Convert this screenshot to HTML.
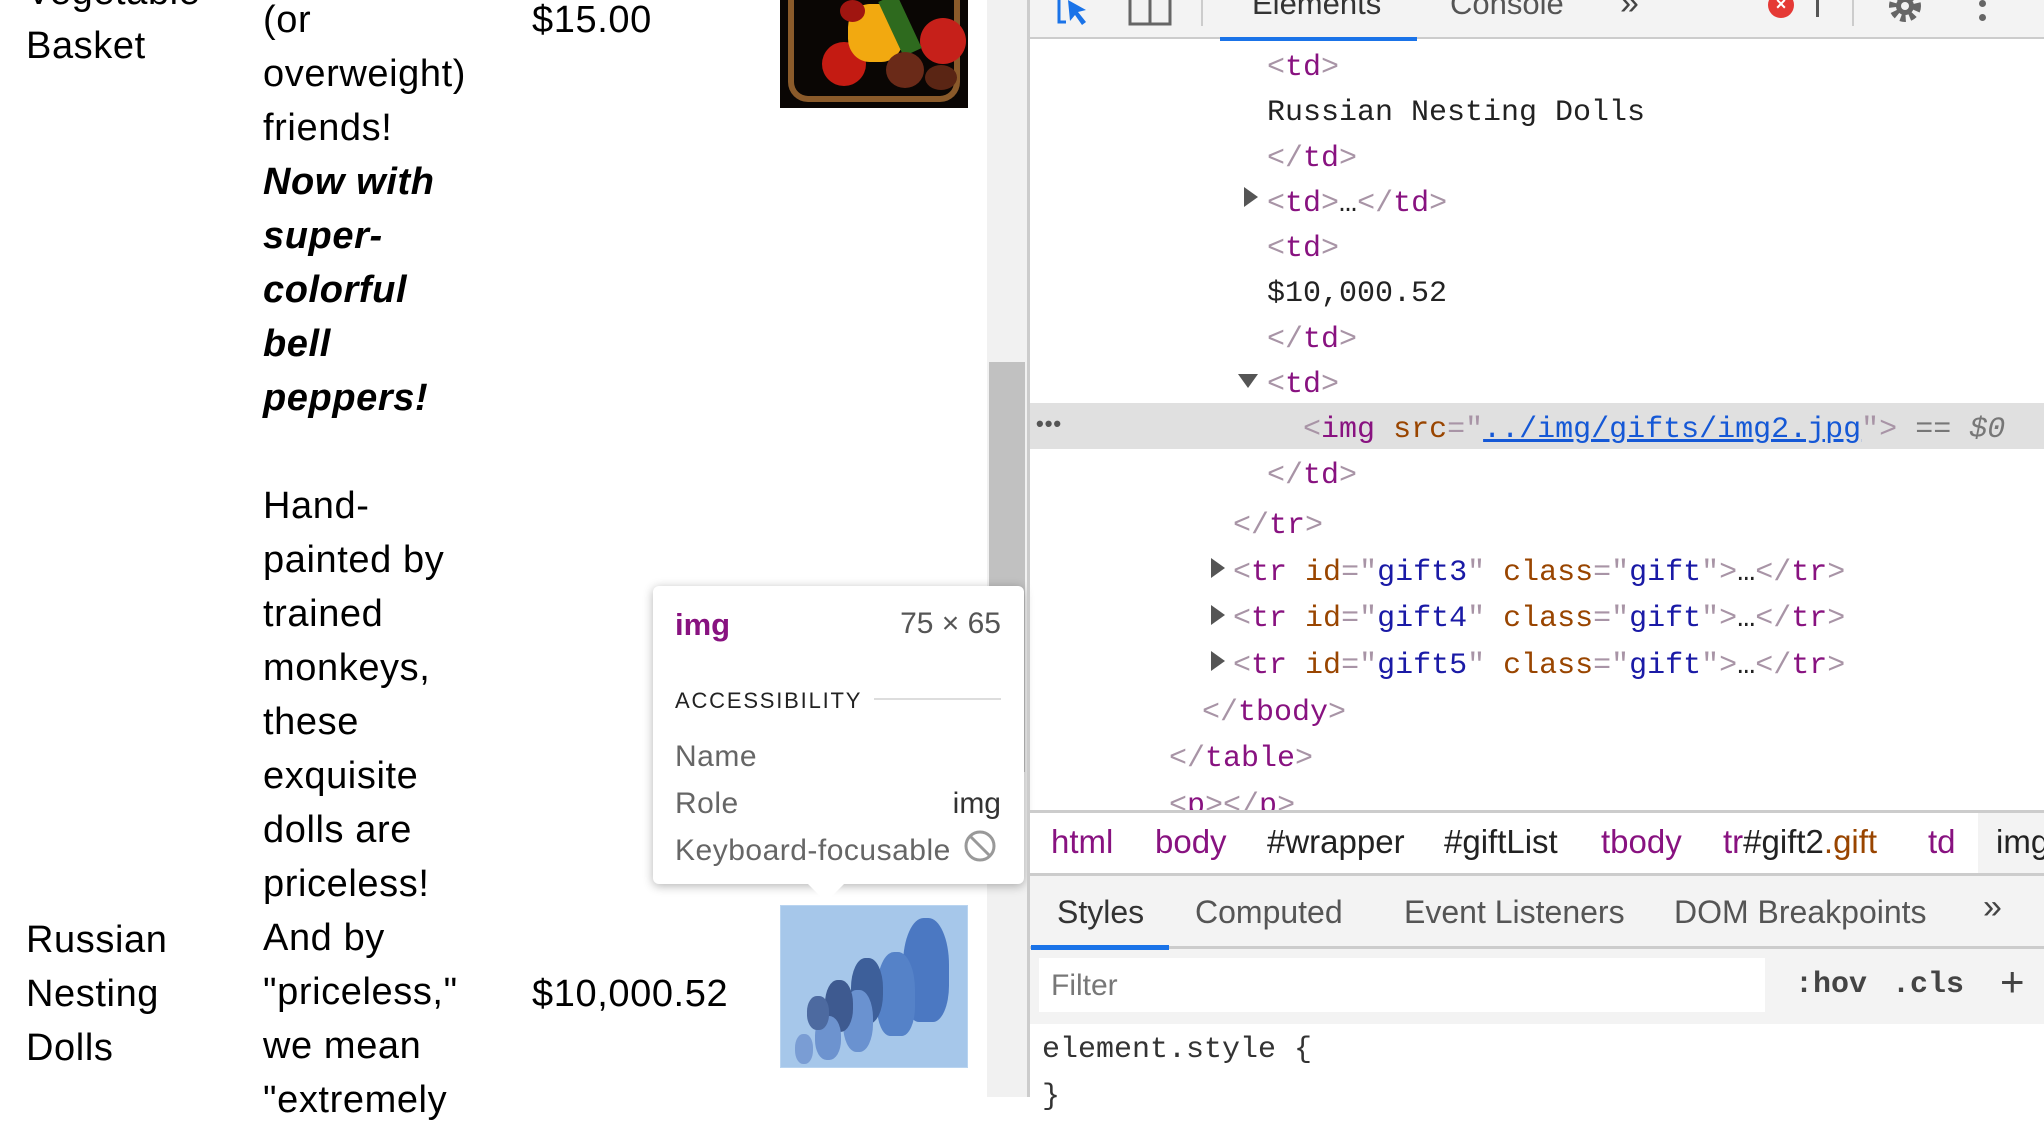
<!DOCTYPE html>
<html><head><meta charset="utf-8"><style>
*{margin:0;padding:0;box-sizing:border-box}
body{width:2044px;height:1097px;overflow:hidden;position:relative;background:#fff;font-family:"Liberation Sans",sans-serif}
.a{position:absolute;white-space:pre}
.pg{font-size:38px;color:#000;line-height:54px;letter-spacing:0.6px}
.bi{font-weight:bold;font-style:italic}
.m{font-family:"Liberation Mono",monospace;font-size:30px;line-height:46.7px;color:#222}
.t{color:#881280}.b{color:#a894a6}.n{color:#994500}.v{color:#1a1aa6}
.tri{position:absolute;width:0;height:0}
</style></head><body>
<!-- page -->
<div class="a pg" style="left:26px;top:-35px">Vegetable
Basket</div>
<div class="a pg" style="left:263px;top:-7px">(or
overweight)
friends!
<span class="bi">Now with
super-
colorful
bell
peppers!</span>

Hand-
painted by
trained
monkeys,
these
exquisite
dolls are
priceless!
And by
"priceless,"
we mean
"extremely</div>
<div class="a pg" style="left:26px;top:913px">Russian
Nesting
Dolls</div>
<div class="a pg" style="left:532px;top:-7px">$15.00</div>
<div class="a pg" style="left:532px;top:967px">$10,000.52</div>
<!-- veg image -->
<div class="a" style="left:780px;top:0;width:188px;height:108px;background:#0a0604;overflow:hidden">
<div class="a" style="left:8px;top:-10px;width:172px;height:112px;border:6px solid #8a5a2a;border-top:none;border-radius:0 0 20px 20px"></div>
<div class="a" style="left:42px;top:42px;width:44px;height:44px;border-radius:50%;background:#c41b12"></div>
<div class="a" style="left:68px;top:4px;width:55px;height:58px;border-radius:40%;background:#f2a910"></div>
<div class="a" style="left:140px;top:18px;width:46px;height:46px;border-radius:50%;background:#c6201a"></div>
<div class="a" style="left:110px;top:-5px;width:20px;height:60px;background:#2e6a1e;transform:rotate(-25deg)"></div>
<div class="a" style="left:106px;top:52px;width:38px;height:36px;border-radius:50%;background:#6a2a18"></div>
<div class="a" style="left:145px;top:65px;width:32px;height:25px;border-radius:50%;background:#5a2514"></div>
<div class="a" style="left:60px;top:0;width:25px;height:22px;border-radius:50%;background:#a01510"></div>
</div>
<!-- dolls -->
<div class="a" style="left:780px;top:905px;width:188px;height:163px;background:#a6c7ea;border:1px solid #b9d4f0">
<div class="a" style="left:122px;top:12px;width:46px;height:104px;border-radius:45% 45% 35% 35%;background:#4b78c2"></div>
<div class="a" style="left:96px;top:46px;width:38px;height:84px;border-radius:45% 45% 35% 35%;background:#5582c8"></div>
<div class="a" style="left:70px;top:52px;width:32px;height:66px;border-radius:45%;background:#3d5f9a"></div>
<div class="a" style="left:62px;top:84px;width:30px;height:62px;border-radius:45%;background:#6a92d0"></div>
<div class="a" style="left:44px;top:74px;width:28px;height:52px;border-radius:45%;background:#3e5a90"></div>
<div class="a" style="left:34px;top:110px;width:26px;height:44px;border-radius:45%;background:#6d93cf"></div>
<div class="a" style="left:26px;top:90px;width:22px;height:34px;border-radius:45%;background:#4d6aa0"></div>
<div class="a" style="left:14px;top:128px;width:18px;height:30px;border-radius:45%;background:#7a9dd4"></div>
</div>
<!-- scrollbar -->
<div class="a" style="left:987px;top:0;width:40px;height:1097px;background:#f1f1f1"></div>
<div class="a" style="left:989px;top:362px;width:36px;height:410px;background:#c1c1c1"></div>
<!-- tooltip -->
<div class="a" style="left:653px;top:586px;width:371px;height:298px;background:#fff;border-radius:6px;box-shadow:0 2px 10px rgba(0,0,0,.3)"></div>
<div class="tri" style="left:808px;top:884px;border-left:18px solid transparent;border-right:18px solid transparent;border-top:18px solid #fff"></div>
<div class="a" style="left:675px;top:607px;font-size:31px;font-weight:bold;color:#881280">img</div>
<div class="a" style="left:880px;top:607px;width:121px;text-align:right;font-size:30px;color:#555">75 × 65</div>
<div class="a" style="left:675px;top:688px;font-size:22px;letter-spacing:1.8px;color:#222">ACCESSIBILITY</div>
<div class="a" style="left:874px;top:698px;width:127px;height:2px;background:#ddd"></div>
<div class="a" style="left:675px;top:733px;font-size:30px;color:#666;line-height:47px;letter-spacing:0.5px">Name
Role
Keyboard-focusable</div>
<div class="a" style="left:940px;top:780px;width:61px;text-align:right;font-size:30px;color:#333;line-height:47px">img</div>
<svg class="a" style="left:963px;top:829px" width="34" height="34" viewBox="0 0 34 34"><circle cx="17" cy="17" r="14" fill="none" stroke="#999" stroke-width="3"/><path d="M7 7L27 27" stroke="#999" stroke-width="3"/></svg>
<!-- devtools -->
<div class="a" style="left:1027px;top:0;width:3px;height:1097px;background:#ccc"></div>
<div class="a" style="left:1030px;top:0;width:1014px;height:39px;background:#f3f3f3;border-bottom:2px solid #ccc"></div>
<div class="a" style="left:1220px;top:37px;width:197px;height:4px;background:#1a73e8"></div>
<svg class="a" style="left:1056px;top:0" width="40" height="26"><path d="M3 0V22H10" stroke="#1a73e8" stroke-width="3" fill="none"/><path d="M12 0L30 10L22 12L30 22L26 25L19 15L14 21Z" fill="#1a73e8"/></svg>
<svg class="a" style="left:1128px;top:0" width="44" height="26"><rect x="2" y="-4" width="40" height="28" fill="none" stroke="#666" stroke-width="3"/><path d="M22 0V24" stroke="#666" stroke-width="3"/></svg>
<div class="a" style="left:1201px;top:0;width:2px;height:26px;background:#ccc"></div>
<div class="a" style="left:1252px;top:-14px;font-size:31px;color:#333">Elements</div>
<div class="a" style="left:1450px;top:-14px;font-size:31px;color:#555">Console</div>
<div class="a" style="left:1620px;top:-16px;font-size:34px;color:#444">»</div>
<div class="a" style="left:1768px;top:-8px;width:26px;height:26px;border-radius:50%;background:#e53935;color:#fff;font-size:18px;font-weight:bold;text-align:center;line-height:24px">×</div>
<div class="a" style="left:1816px;top:0;width:3px;height:17px;background:#555"></div>
<div class="a" style="left:1852px;top:0;width:2px;height:26px;background:#ccc"></div>
<svg class="a" style="left:1884px;top:0" width="42" height="26"><circle cx="21" cy="6" r="12" fill="none" stroke="#666" stroke-width="8" stroke-dasharray="5 4"/><circle cx="21" cy="6" r="9" fill="#666"/><circle cx="21" cy="6" r="4" fill="#f3f3f3"/></svg>
<div class="a" style="left:1979px;top:0;width:7px;height:7px;border-radius:50%;background:#666"></div>
<div class="a" style="left:1979px;top:14px;width:7px;height:7px;border-radius:50%;background:#666"></div>
<!-- DOM -->
<div class="a" style="left:1030px;top:403px;width:1014px;height:46px;background:#e0e0e0"></div>
<div class="a" style="left:1036px;top:411px;font-size:22px;color:#555;font-weight:bold;letter-spacing:1px">•••</div>
<div class="a m" style="left:1267px;top:46px;line-height:45.3px"><span class="b">&lt;</span><span class="t">td</span><span class="b">&gt;</span>
Russian Nesting Dolls
<span class="b">&lt;/</span><span class="t">td</span><span class="b">&gt;</span>
<span class="b">&lt;</span><span class="t">td</span><span class="b">&gt;</span>…<span class="b">&lt;/</span><span class="t">td</span><span class="b">&gt;</span>
<span class="b">&lt;</span><span class="t">td</span><span class="b">&gt;</span>
$10,000.52
<span class="b">&lt;/</span><span class="t">td</span><span class="b">&gt;</span>
<span class="b">&lt;</span><span class="t">td</span><span class="b">&gt;</span>
  <span class="b">&lt;</span><span class="t">img</span> <span class="n">src</span><span class="b">="</span><span class="v" style="color:#1558d6;text-decoration:underline">../img/gifts/img2.jpg</span><span class="b">"&gt;</span> <span style="color:#777">== <i>$0</i></span>
<span class="b">&lt;/</span><span class="t">td</span><span class="b">&gt;</span></div>
<div class="a m" style="left:1233px;top:503px"><span class="b">&lt;/</span><span class="t">tr</span><span class="b">&gt;</span>
<span class="b">&lt;</span><span class="t">tr</span> <span class="n">id</span><span class="b">="</span><span class="v">gift3</span><span class="b">"</span> <span class="n">class</span><span class="b">="</span><span class="v">gift</span><span class="b">"&gt;</span>…<span class="b">&lt;/</span><span class="t">tr</span><span class="b">&gt;</span>
<span class="b">&lt;</span><span class="t">tr</span> <span class="n">id</span><span class="b">="</span><span class="v">gift4</span><span class="b">"</span> <span class="n">class</span><span class="b">="</span><span class="v">gift</span><span class="b">"&gt;</span>…<span class="b">&lt;/</span><span class="t">tr</span><span class="b">&gt;</span>
<span class="b">&lt;</span><span class="t">tr</span> <span class="n">id</span><span class="b">="</span><span class="v">gift5</span><span class="b">"</span> <span class="n">class</span><span class="b">="</span><span class="v">gift</span><span class="b">"&gt;</span>…<span class="b">&lt;/</span><span class="t">tr</span><span class="b">&gt;</span></div>
<div class="a m" style="left:1202px;top:690px"><span class="b">&lt;/</span><span class="t">tbody</span><span class="b">&gt;</span></div>
<div class="a m" style="left:1169px;top:736px"><span class="b">&lt;/</span><span class="t">table</span><span class="b">&gt;</span>
<span class="b">&lt;</span><span class="t">p</span><span class="b">&gt;&lt;/</span><span class="t">p</span><span class="b">&gt;</span></div>
<div class="tri" style="left:1244px;top:187px;border-top:10px solid transparent;border-bottom:10px solid transparent;border-left:14px solid #555"></div>
<div class="tri" style="left:1238px;top:374px;border-left:10px solid transparent;border-right:10px solid transparent;border-top:14px solid #555"></div>
<div class="tri" style="left:1211px;top:558px;border-top:10px solid transparent;border-bottom:10px solid transparent;border-left:14px solid #555"></div>
<div class="tri" style="left:1211px;top:605px;border-top:10px solid transparent;border-bottom:10px solid transparent;border-left:14px solid #555"></div>
<div class="tri" style="left:1211px;top:651px;border-top:10px solid transparent;border-bottom:10px solid transparent;border-left:14px solid #555"></div>
<!-- breadcrumbs -->
<div class="a" style="left:1030px;top:810px;width:1014px;height:66px;background:#fff;border-top:3px solid #ccc;border-bottom:3px solid #ccc"></div>
<div class="a" style="left:1978px;top:813px;width:66px;height:60px;background:#f3f3f3"></div>
<div class="a t" style="left:1051px;top:823px;font-size:33px">html</div>
<div class="a t" style="left:1155px;top:823px;font-size:33px">body</div>
<div class="a" style="left:1267px;top:823px;font-size:33px;color:#222">#wrapper</div>
<div class="a" style="left:1444px;top:823px;font-size:33px;color:#222">#giftList</div>
<div class="a t" style="left:1601px;top:823px;font-size:33px">tbody</div>
<div class="a" style="left:1723px;top:823px;font-size:33px;color:#222"><span class="t">tr</span>#gift2<span class="n">.gift</span></div>
<div class="a t" style="left:1928px;top:823px;font-size:33px">td</div>
<div class="a" style="left:1996px;top:823px;font-size:33px;color:#222">img</div>
<!-- styles tabs -->
<div class="a" style="left:1030px;top:876px;width:1014px;height:148px;background:#f3f3f3"></div>
<div class="a" style="left:1030px;top:946px;width:1014px;height:3px;background:#ccc"></div>
<div class="a" style="left:1031px;top:945px;width:138px;height:5px;background:#1a73e8"></div>
<div class="a" style="left:1057px;top:894px;font-size:32px;color:#333">Styles</div>
<div class="a" style="left:1195px;top:894px;font-size:32px;color:#555">Computed</div>
<div class="a" style="left:1404px;top:894px;font-size:32px;color:#555">Event Listeners</div>
<div class="a" style="left:1674px;top:894px;font-size:32px;color:#555">DOM Breakpoints</div>
<div class="a" style="left:1983px;top:888px;font-size:34px;color:#444">»</div>
<div class="a" style="left:1039px;top:958px;width:726px;height:54px;background:#fff"></div>
<div class="a" style="left:1051px;top:969px;font-size:30px;color:#777">Filter</div>
<div class="a" style="left:1795px;top:968px;font-family:'Liberation Mono',monospace;font-size:30px;font-weight:bold;color:#444">:hov</div>
<div class="a" style="left:1892px;top:968px;font-family:'Liberation Mono',monospace;font-size:30px;font-weight:bold;color:#444">.cls</div>
<div class="a" style="left:2000px;top:958px;font-size:42px;color:#444">+</div>
<div class="a m" style="left:1042px;top:1027px;color:#333">element.style {
}</div>
</body></html>
